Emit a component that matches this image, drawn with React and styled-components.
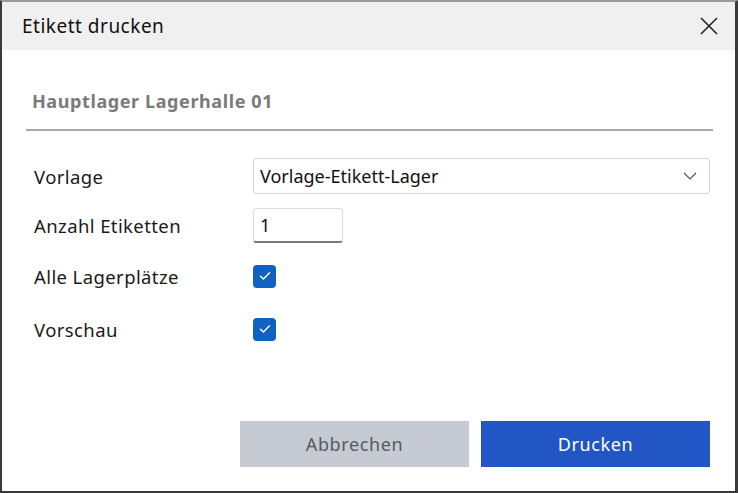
import React, { useState } from 'react'
import styled, { createGlobalStyle } from 'styled-components'

const GlobalStyle = createGlobalStyle`
  html, body { margin: 0; padding: 0; background: #ffffff; }
  body { font-family: "Noto Sans", "Open Sans", sans-serif; }
`

function CheckIcon() {
  return (
    <svg width="12" height="10" viewBox="0 0 12 10" fill="none">
      <path d="M1.5 5.2 L4.4 8 L10.5 1.8" stroke="#ffffff" strokeWidth="1.4" strokeLinecap="round" strokeLinejoin="round" />
    </svg>
  )
}

function Chevron() {
  return (
    <svg width="14" height="8" viewBox="0 0 14 8" fill="none">
      <path d="M1 1 L7 7 L13 1" stroke="#555" strokeWidth="1.2" />
    </svg>
  )
}

function CloseIcon() {
  return (
    <svg width="18" height="18" viewBox="0 0 18 18" fill="none">
      <path d="M1 1 L17 17 M17 1 L1 17" stroke="#222" strokeWidth="1.6" />
    </svg>
  )
}

function App() {
  const [count, setCount] = useState('1')
  const [allPlaces, setAllPlaces] = useState(true)
  const [preview, setPreview] = useState(true)

  return (
    <>
      <GlobalStyle />
      <Window>
        <TitleBar>
          <Title>Etikett drucken</Title>
          <CloseButton><CloseIcon /></CloseButton>
        </TitleBar>
        <Body>
          <Heading>Hauptlager Lagerhalle 01</Heading>
          <Divider />
          <Form>
            <Row>
              <Label>Vorlage</Label>
              <Select>
                <span>Vorlage-Etikett-Lager</span>
                <Chevron />
              </Select>
            </Row>
            <Row>
              <Label>Anzahl Etiketten</Label>
              <NumberInput value={count} onChange={e => setCount(e.target.value)} />
            </Row>
            <Row $tall>
              <Label>Alle Lagerplätze</Label>
              <CheckBox $checked={allPlaces} onClick={() => setAllPlaces(!allPlaces)}>
                {allPlaces && <CheckIcon />}
              </CheckBox>
            </Row>
            <Row $tall>
              <Label>Vorschau</Label>
              <CheckBox $checked={preview} onClick={() => setPreview(!preview)}>
                {preview && <CheckIcon />}
              </CheckBox>
            </Row>
          </Form>
          <Footer>
            <Button>Abbrechen</Button>
            <Button $primary>Drucken</Button>
          </Footer>
        </Body>
      </Window>
    </>
  )
}

export default App

const Window = styled.div`
  width: 738px;
  height: 493px;
  box-sizing: border-box;
  border: 2px solid #3a3a3a;
  border-top-color: #9a9a9a;
  border-right-width: 3px;
  background: #ffffff;
  display: flex;
  flex-direction: column;
`

const TitleBar = styled.div`
  height: 48px;
  background: #f0f0f0;
  display: flex;
  align-items: center;
  justify-content: space-between;
  padding: 0 14px 0 20px;
  flex-shrink: 0;
`

const Title = styled.div`
  font-size: 19px;
  letter-spacing: 0.5px;
  color: #111;
`

const CloseButton = styled.div`
  width: 24px;
  height: 24px;
  display: flex;
  align-items: center;
  justify-content: center;
`

const Body = styled.div`
  flex: 1;
  display: flex;
  flex-direction: column;
  padding: 40px 22px 0 24px;
`

const Heading = styled.div`
  font-size: 18px;
  letter-spacing: 0.6px;
  font-weight: 700;
  color: #7a7a7a;
  padding-left: 6px;
  line-height: 22px;
`

const Divider = styled.div`
  height: 2px;
  background: #a8a8a8;
  margin-top: 17px;
`

const Form = styled.div`
  display: flex;
  flex-direction: column;
  padding: 27px 0 0 8px;
  gap: 13px;
`

const Row = styled.div`
  display: grid;
  grid-template-columns: 219px 1fr;
  align-items: center;
  height: ${p => (p.$tall ? '40px' : '36px')};
`

const Label = styled.div`
  font-size: 18.5px;
  letter-spacing: 0.4px;
  color: #1a1a1a;
`

const Select = styled.div`
  height: 36px;
  box-sizing: border-box;
  border: 1px solid #d4d4d4;
  border-radius: 3px;
  display: flex;
  align-items: center;
  justify-content: space-between;
  padding: 0 12px 0 6px;
  font-size: 18px;
  color: #111;
  margin-right: 3px;
`

const NumberInput = styled.input`
  width: 90px;
  height: 35px;
  box-sizing: border-box;
  border: 1px solid #dcdcdc;
  border-bottom: 2px solid #7a7a7a;
  border-radius: 3px;
  padding: 0 6px;
  font-family: inherit;
  font-size: 18px;
  color: #111;
  outline: none;
`

const CheckBox = styled.div`
  width: 23px;
  height: 23px;
  border-radius: 4px;
  background: ${p => (p.$checked ? '#0f62c2' : '#ffffff')};
  border: ${p => (p.$checked ? 'none' : '1px solid #555')};
  display: flex;
  align-items: center;
  justify-content: center;
  cursor: pointer;
`

const Footer = styled.div`
  margin-top: auto;
  margin-bottom: 24px;
  display: flex;
  justify-content: flex-end;
  gap: 12px;
  padding-right: 3px;
`

const Button = styled.div`
  width: 229px;
  height: 46px;
  display: flex;
  align-items: center;
  justify-content: center;
  font-size: 18px;
  letter-spacing: 0.6px;
  background: ${p => (p.$primary ? '#2256c5' : '#c6cad3')};
  color: ${p => (p.$primary ? '#ffffff' : '#555a63')};
  cursor: pointer;
`
